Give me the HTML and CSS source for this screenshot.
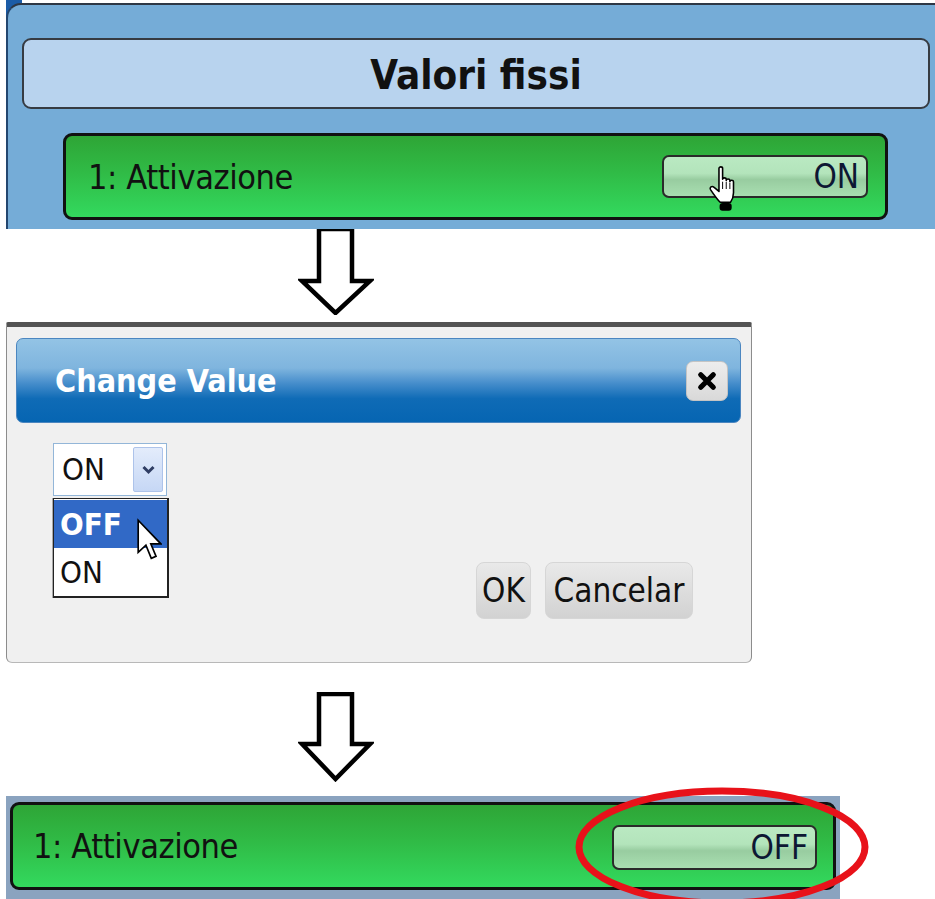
FILE: index.html
```
<!DOCTYPE html>
<html lang="it">
<head>
<meta charset="utf-8">
<title>Valori fissi</title>
<link rel="stylesheet" href="styles.css">
</head>
<body>
<div class="page">
  <section class="top">
    <div class="top-panel">
      <div class="title-box">Valori fissi</div>
      <div class="row row-top">
        <span class="row-label">1: Attivazione</span>
        <div class="val-btn">
          <span class="val-text">ON</span>
          <svg class="hand" viewBox="0 0 23 38" width="28" height="46">
            <path d="M9,2 C9,0.3 12,0.3 12,2 L12,11 C12,9.4 15,9.4 15,11 L15,12 C15,10.4 18,10.4 18,12 L18,13 C18,11.4 21,11.4 21,13 L21,22 C21,26 19.5,28.5 18.5,30 L10,30 C8,28 4,22.5 2,19.5 C1,17.8 3,16 5,17.6 L9,21 Z" fill="#fff" stroke="#000" stroke-width="1.3" stroke-linejoin="round"/>
            <path d="M12,13 V19 M15,13 V19 M18,14 V19" stroke="#000" stroke-width="0.8" fill="none"/>
            <rect x="9.5" y="30.5" width="10" height="6.5" rx="2.5" fill="#000"/>
          </svg>
        </div>
      </div>
    </div>
  </section>

  <div class="arrow-wrap arrow-1">
    <svg class="arrow" viewBox="0 0 76 86" width="76" height="86">
      <path d="M21,0 L54,0 L54,52 L72,52 L37.5,84 L4,52 L21,52 Z" fill="#fff" stroke="#000" stroke-width="4.5" stroke-linejoin="miter"/>
    </svg>
  </div>

  <section class="dialog">
    <header class="dlg-head">
      <span class="dlg-title">Change Value</span>
      <button class="dlg-close" type="button" aria-label="close">
        <svg viewBox="0 0 16 16" width="20" height="20"><path d="M3,3 L13,13 M13,3 L3,13" stroke="#000" stroke-width="4.2" stroke-linecap="round"/></svg>
      </button>
    </header>
    <div class="dlg-body">
      <div class="select-wrap">
        <div class="select">
          <span class="select-val">ON</span>
          <span class="select-btn">
            <svg viewBox="0 0 14 10" width="15" height="10"><path d="M2,2 L7,7 L12,2" stroke="#2f3d63" stroke-width="3" fill="none"/></svg>
          </span>
        </div>
        <div class="dropdown">
          <div class="opt opt-sel">OFF</div>
          <div class="opt">ON</div>
          <svg class="pointer" viewBox="0 0 21 36" width="25" height="45">
            <path d="M1,1 L1,28 L7.5,22 L12,33 L16,31.3 L11.6,20.8 L20,20.8 Z" fill="#fff" stroke="#000" stroke-width="1.4" stroke-linejoin="miter"/>
          </svg>
        </div>
      </div>
      <div class="dlg-actions">
        <button class="btn btn-ok" type="button">OK</button>
        <button class="btn btn-cancel" type="button">Cancelar</button>
      </div>
    </div>
  </section>

  <div class="arrow-wrap arrow-2">
    <svg class="arrow" viewBox="0 0 76 90" width="76" height="90">
      <path d="M21,2 L54,2 L54,52 L72,52 L37.5,87 L4,52 L21,52 Z" fill="#fff" stroke="#000" stroke-width="4.5" stroke-linejoin="miter"/>
    </svg>
  </div>

  <section class="bottom">
    <div class="row row-bottom">
      <span class="row-label">1: Attivazione</span>
      <div class="val-btn val-btn-off">
        <span class="val-text">OFF</span>
      </div>
    </div>
    <svg class="ring" viewBox="0 0 310 130" width="310" height="130">
      <ellipse cx="156" cy="62" rx="143" ry="56" fill="none" stroke="#e8121a" stroke-width="7"/>
    </svg>
  </section>
</div>
</body>
</html>
```

FILE: styles.css
```
* { box-sizing: border-box; }

html, body {
  margin: 0;
  padding: 0;
  background: #ffffff;
}

.page {
  width: 935px;
  height: 899px;
  overflow: hidden;
  font-family: "DejaVu Sans Condensed", "DejaVu Sans", sans-serif;
  color: #111;
}

/* ---------- top panel ---------- */
.top {
  height: 229px;
  margin-left: 6px;
  padding-top: 3px;
  background: linear-gradient(#1b5ca7, #1b5ca7) left top / 16px 100% no-repeat;
}

.top-panel {
  height: 100%;
  background: #75acd7;
  border-top: 2px solid #2d3745;
  border-left: 2px solid #23466f;
  border-top-left-radius: 15px;
  padding: 33px 0 0 14px;
}

.title-box {
  width: 908px;
  height: 71px;
  background: #b8d3ee;
  border: 2px solid #363b42;
  border-radius: 9px;
  display: flex;
  align-items: center;
  justify-content: center;
  font-weight: bold;
  font-size: 40px;
  color: #111;
  padding-top: 2px;
}

.row {
  display: flex;
  align-items: center;
  justify-content: space-between;
  background: linear-gradient(#2ea536 0%, #30bb46 45%, #33d95e 100%);
  border: 3px solid #111;
  border-radius: 9px;
}

.row-top {
  width: 825px;
  height: 87px;
  margin: 24px 0 0 41px;
  padding: 0 17px 0 22px;
}

.row-label {
  font-size: 34px;
  color: #111;
  letter-spacing: -0.4px;
}

.val-btn {
  position: relative;
  width: 206px;
  height: 43px;
  border: 2px solid #2a2a2a;
  border-radius: 7px;
  background: linear-gradient(#bae9c2 0%, #b3e4bb 42%, #98cca0 58%, #9fd4a7 75%, #a9ddb1 100%);
  display: flex;
  align-items: center;
  justify-content: flex-end;
  padding-right: 7px;
}

.val-text {
  font-size: 33px;
  color: #0d1733;
  line-height: 1;
}

.hand {
  position: absolute;
  left: 44px;
  top: 9px;
}

/* ---------- arrows ---------- */
.arrow-wrap {
  display: flex;
}

.arrow-1 {
  height: 93px;
}

.arrow-1 .arrow {
  margin-left: 298px;
}

.arrow-2 {
  height: 133px;
}

.arrow-2 .arrow {
  margin: 29px 0 0 298px;
}

/* ---------- dialog ---------- */
.dialog {
  width: 746px;
  height: 341px;
  margin-left: 6px;
  background: #f0f0f0;
  border-top: 5px solid #535353;
  border-left: 1px solid #8c8c8c;
  border-right: 1px solid #8c8c8c;
  border-bottom: 1px solid #b8b8b8;
  border-radius: 2px 2px 6px 6px;
  padding: 11px 10px 0 9px;
}

.dlg-head {
  height: 85px;
  border: 1px solid #4b86c0;
  border-radius: 7px;
  background: linear-gradient(#93c3e5 0%, #7fb5de 35%, #4a90cd 52%, #0f6bb6 72%, #0665b2 100%);
  display: flex;
  align-items: center;
  justify-content: space-between;
  padding: 0 12px 0 38px;
}

.dlg-title {
  color: #ffffff;
  font-weight: bold;
  font-size: 32px;
  padding-top: 1px;
}

.dlg-close {
  width: 42px;
  height: 40px;
  border: 1px solid #c4c4c4;
  border-radius: 7px;
  background: linear-gradient(#ededed, #d9d9d9);
  display: flex;
  align-items: center;
  justify-content: center;
  padding: 0;
}

.dlg-body {
  display: flex;
  align-items: flex-start;
  padding: 20px 0 0 37px;
}

.select-wrap {
  position: relative;
}

.select {
  width: 114px;
  height: 53px;
  background: #ffffff;
  border: 1px solid #93b6d8;
  display: flex;
  align-items: center;
  justify-content: space-between;
  padding: 3px 3px 3px 8px;
}

.select-val {
  font-size: 31px;
  line-height: 1;
}

.select-btn {
  width: 30px;
  height: 45px;
  border: 1px solid #adc3ea;
  border-radius: 2px;
  background: linear-gradient(#e3ecfb, #c6d7f5);
  display: flex;
  align-items: center;
  justify-content: center;
}

.dropdown {
  position: absolute;
  left: 0;
  top: 55px;
  width: 116px;
  background: #ffffff;
  border: 1px solid #222;
  border-bottom-width: 2px;
  border-right-width: 2px;
  box-shadow: -1px 0 0 #a9a9a9;
  padding: 1px 0 0 0;
}

.opt {
  height: 48px;
  font-size: 31px;
  line-height: 48px;
  padding-left: 6px;
  color: #111;
}

.opt-sel {
  background: #3169c6;
  color: #ffffff;
  font-weight: bold;
}

.pointer {
  position: absolute;
  left: 83px;
  top: 19px;
}

.dlg-actions {
  display: flex;
  gap: 14px;
  margin: 119px 48px 0 auto;
}

.btn {
  height: 57px;
  border: 1px solid #d6d6d6;
  border-radius: 8px;
  background: linear-gradient(#e9e9e9, #d2d2d2);
  font-family: "DejaVu Sans Condensed", "DejaVu Sans", sans-serif;
  font-size: 33px;
  color: #111;
  padding: 0;
}

.btn-ok {
  width: 55px;
}

.btn-cancel {
  width: 148px;
}

/* ---------- bottom ---------- */
.bottom {
  position: relative;
  width: 834px;
  height: 103px;
  margin-left: 6px;
  background: #8aa3bf;
  padding: 6px 4px 0 4px;
}

.row-bottom {
  height: 88px;
  padding: 0 16px 0 20px;
}

.val-btn-off {
  width: 205px;
  height: 45px;
  margin-top: 2px;
}

.ring {
  position: absolute;
  left: 560px;
  top: -11px;
}
```
